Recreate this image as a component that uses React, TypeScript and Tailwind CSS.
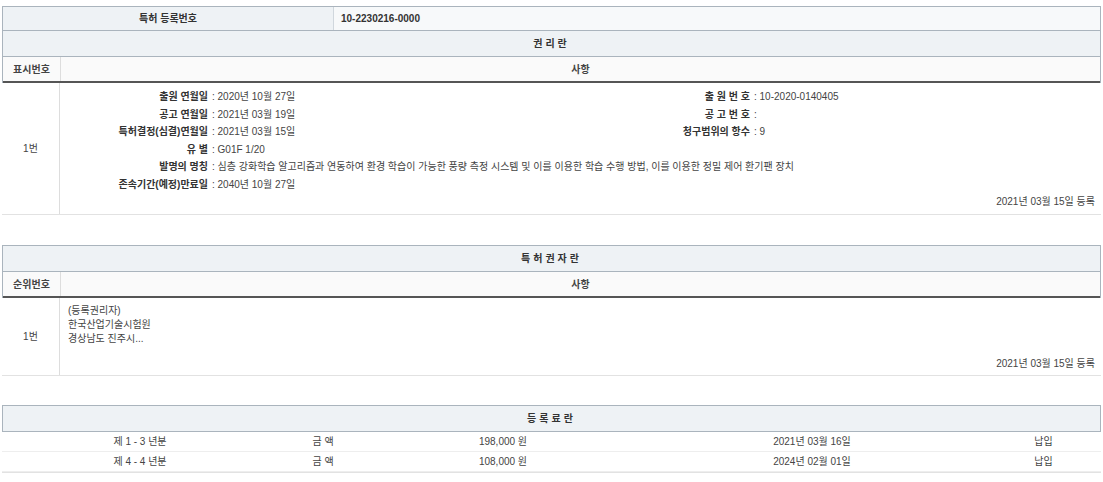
const font = { fontFamily: '"Liberation Sans", "Noto Sans CJK KR", sans-serif' };

const Info = ({ label, value, w }: { label: string; value: string; w: string }) => (
  <div className="flex h-[17.5px] items-center">
    <span className={`${w} shrink-0 text-right font-semibold text-[#333]`}>{label}</span>
    <span className="ml-1">: {value}</span>
  </div>
);

const SectionHead = ({ title, col }: { title: string; col: string }) => (
  <>
    <div className="flex h-[26px] items-center justify-center border-b border-[#aab4bd] bg-[#eef2f5] font-bold tracking-[3px] text-[#333]">
      {title}
    </div>
    <div className="flex h-[26px] border-b-2 border-[#555] bg-[#fafafa] font-bold">
      <div className="flex w-[58px] items-center justify-center border-r border-[#ddd]">{col}</div>
      <div className="flex flex-1 items-center justify-center">사항</div>
    </div>
  </>
);

export default function App() {
  return (
    <div className="min-h-screen bg-white px-[2px] pt-[6px] text-[10px] text-[#444]" style={font}>
      <div className="border-t border-x border-[#aab4bd]">
        <div className="flex h-[24px] border-b border-[#aab4bd]">
          <div className="flex w-[331px] items-center justify-center border-r border-[#d0d7dd] bg-[#eef2f5] font-bold text-[#333]">
            특허 등록번호
          </div>
          <div className="flex flex-1 items-center bg-[#f7f9fa] pl-[7px] font-bold text-[#333]">10-2230216-0000</div>
        </div>
        <SectionHead title="권리란" col="표시번호" />
      </div>
      <div className="flex h-[132px] border-b border-[#e2e2e2]">
        <div className="flex w-[58px] items-center justify-center border-r border-[#ddd]">1번</div>
        <div className="relative flex-1 pt-[5px]">
          <div className="flex">
            <div className="w-[572px]">
              <Info w="w-[148px]" label="출원 연월일" value="2020년 10월 27일" />
              <Info w="w-[148px]" label="공고 연월일" value="2021년 03월 19일" />
              <Info w="w-[148px]" label="특허결정(심결)연월일" value="2021년 03월 15일" />
            </div>
            <div>
              <Info w="w-[118px]" label="출 원 번 호" value="10-2020-0140405" />
              <Info w="w-[118px]" label="공 고 번 호" value="" />
              <Info w="w-[118px]" label="청구범위의 항수" value="9" />
            </div>
          </div>
          <Info w="w-[148px]" label="유 별" value="G01F 1/20" />
          <Info w="w-[148px]" label="발명의 명칭" value="심층 강화학습 알고리즘과 연동하여 환경 학습이 가능한 풍량 측정 시스템 및 이를 이용한 학습 수행 방법, 이를 이용한 정밀 제어 환기팬 장치" />
          <Info w="w-[148px]" label="존속기간(예정)만료일" value="2040년 10월 27일" />
          <div className="mt-[1px] pr-[6px] text-right">2021년 03월 15일 등록</div>
        </div>
      </div>

      <div className="mt-[30px] border-t border-x border-[#aab4bd]">
        <SectionHead title="특허권자란" col="순위번호" />
      </div>
      <div className="flex h-[78px] border-b border-[#e2e2e2]">
        <div className="flex w-[58px] items-center justify-center border-r border-[#ddd]">1번</div>
        <div className="flex-1 pl-[8px] pt-[6px] leading-[14px]">
          <div>(등록권리자)</div>
          <div>한국산업기술시험원</div>
          <div>경상남도 진주시...</div>
          <div className="mt-[11px] pr-[6px] text-right">2021년 03월 15일 등록</div>
        </div>
      </div>

      <div className="mt-[29px] border-t border-x border-[#aab4bd]">
        <div className="flex h-[26px] items-center justify-center border-b border-[#aab4bd] bg-[#eef2f5] font-bold tracking-[3px] text-[#333]">
          등록료란
        </div>
      </div>
      <div className="border-b border-[#e2e2e2]">
        {[
          ["제 1 - 3 년분", "198,000 원", "2021년 03월 16일"],
          ["제 4 - 4 년분", "108,000 원", "2024년 02월 01일"],
        ].map(([a, b, c]) => (
          <div key={a} className="grid h-[20px] grid-cols-[276px_90px_270px_348px_1fr] items-center border-b border-[#eee] text-center">
            <div>{a}</div>
            <div>금 액</div>
            <div>{b}</div>
            <div>{c}</div>
            <div>납입</div>
          </div>
        ))}
      </div>
    </div>
  );
}
